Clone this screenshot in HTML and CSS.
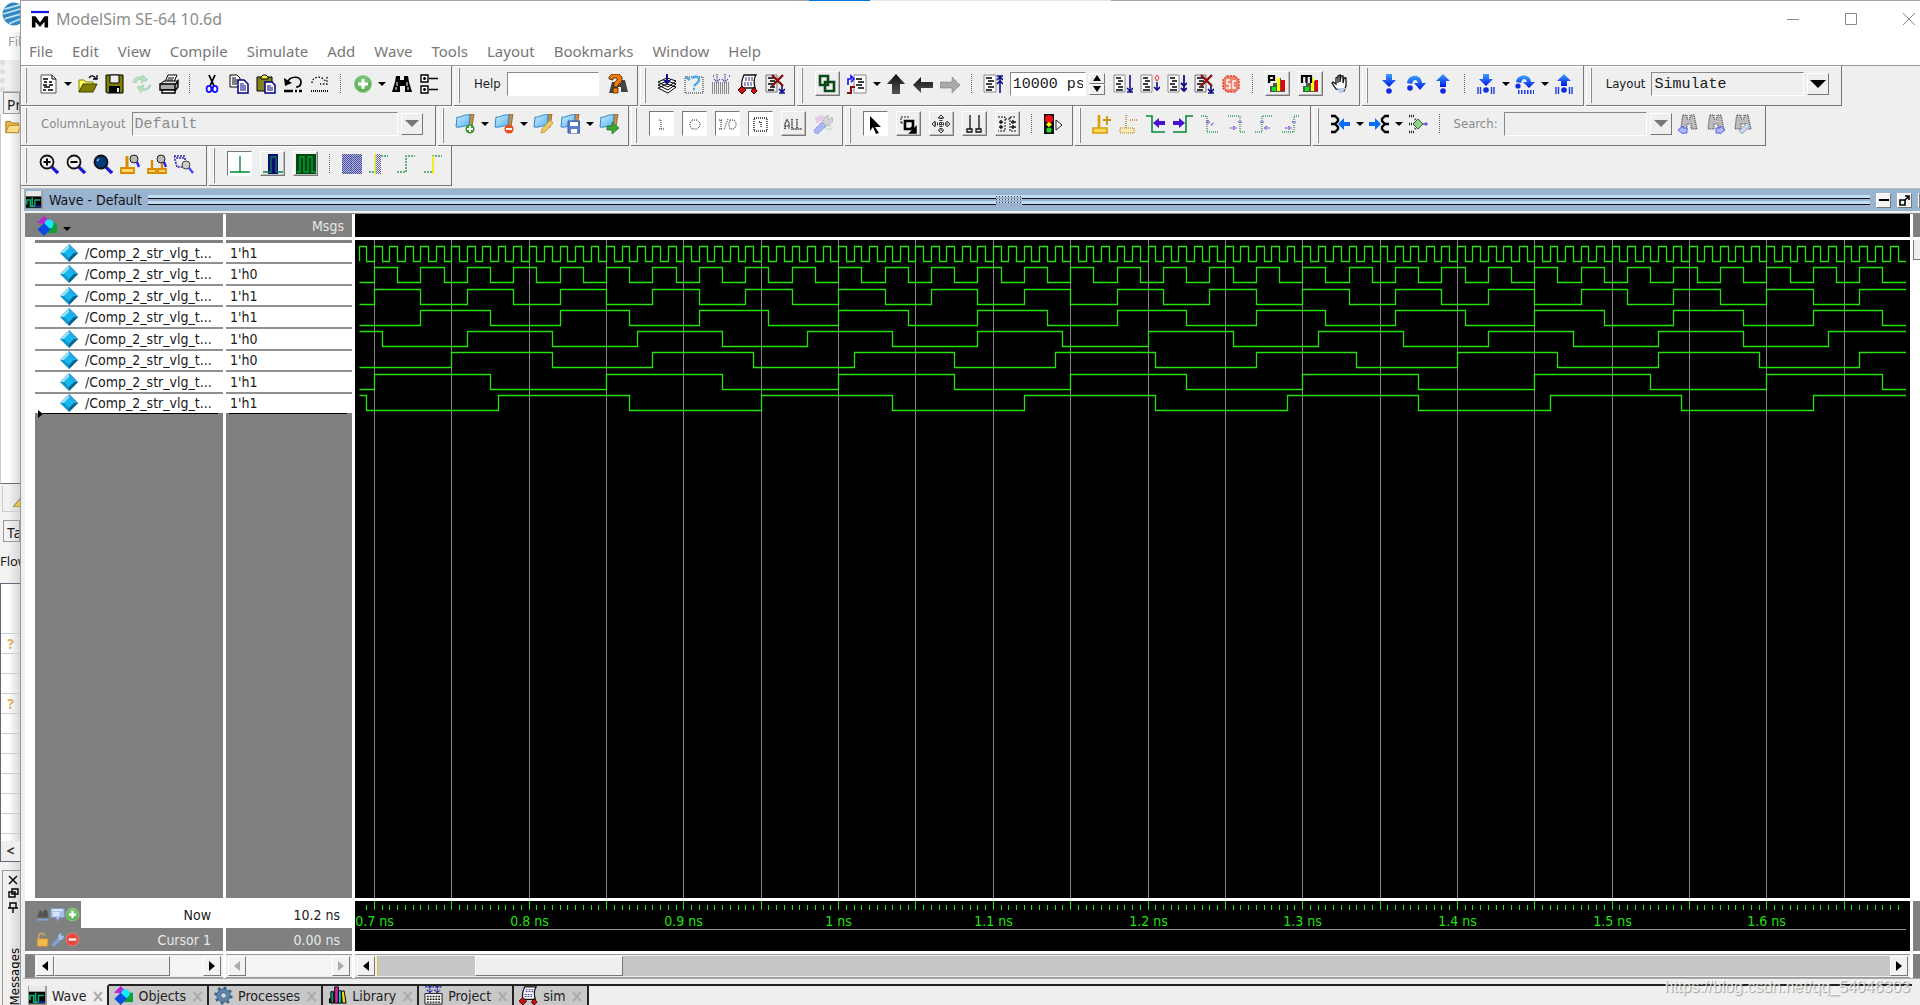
FILE: index.html
```html
<!DOCTYPE html>
<html lang="en">
<head>
<meta charset="utf-8">
<title>ModelSim SE-64 10.6d</title>
<link rel="stylesheet" href="styles.css">
</head>
<body>
<svg class="sprite" aria-hidden="true">
  <defs>
    <linearGradient id="g-blue" x1="0" y1="0" x2="1" y2="1"><stop offset="0" stop-color="#cdeeff"/><stop offset="1" stop-color="#55b0f0"/></linearGradient>
    <linearGradient id="g-dark" x1="0" y1="0" x2="0" y2="1"><stop offset="0" stop-color="#111"/><stop offset="1" stop-color="#555"/></linearGradient>
    <linearGradient id="g-run" x1="0" y1="0" x2="0" y2="1"><stop offset="0" stop-color="#3aa0ff"/><stop offset="1" stop-color="#0018e8"/></linearGradient>
    <pattern id="p-check" width="2" height="2" patternUnits="userSpaceOnUse"><rect width="1" height="1" fill="#000080"/><rect x="1" y="1" width="1" height="1" fill="#000080"/></pattern>
  </defs>
  <symbol id="i-new" viewBox="0 0 20 20"><path d="M2 1h11l4 4v14H2z" fill="#fff" stroke="#555"/><path d="M13 1v4h4" fill="none" stroke="#000"/><path d="M4 5h5M5 8h3M10 8h3M4 11h4M10 11h4M5 13h6M4 16h3M9 16h5" stroke="#000" stroke-width="1.300"/></symbol>
  <symbol id="i-open" viewBox="0 0 20 20"><path d="M1 18V6h5l2 2h7v3" fill="#ffff60" stroke="#808000"/><path d="M1 18l4-8h14l-4 8z" fill="#808000" stroke="#3a3a00"/><path d="M11 4c2-3 5-3 7 1M15 5h4V1" fill="none" stroke="#000" stroke-width="1.3"/></symbol>
  <symbol id="i-save" viewBox="0 0 20 20"><path d="M1 1h17v18H2l-1-1z" fill="#808000" stroke="#000"/><path d="M5 1h9v8H5z" fill="#eee" stroke="#000"/><path d="M4 12h11v7H4z" fill="#000"/><path d="M12 14h2v4h-2z" fill="#eee"/></symbol>
  <symbol id="i-reload" viewBox="0 0 20 20"><g fill="#b9e0c2" stroke="#8cc79a" stroke-dasharray="1 1"><path d="M1 8c1-5 6-6 9-5l1-2 5 5-7 3 1-3c-3-1-5 0-6 3z"/><path d="M19 11c-1 5-6 6-9 5l-1 3-4-6 7-2-1 3c3 1 5 0 6-3z"/></g></symbol>
  <symbol id="i-print" viewBox="0 0 20 20"><path d="M6 8l3-7h9l-3 7z" fill="#fff" stroke="#000"/><path d="M9 4h6M8 6h6" stroke="#000"/><path d="M1 10l4-3h14l-3 4z" fill="#ddd" stroke="#000"/><path d="M1 10h15v6H1zM16 11l3-4v6l-3 4z" fill="#aaa" stroke="#000" stroke-width="1.4"/><path d="M3 16h13v3H3z" fill="#fff" stroke="#000" stroke-width="1.4"/></symbol>
  <symbol id="i-cut" viewBox="0 0 20 20"><path d="M7 1l5 11M13 1L8 12" stroke="#000" stroke-width="1.8" fill="none"/><ellipse cx="7" cy="15" rx="2.4" ry="3.2" fill="none" stroke="#11f" stroke-width="1.8"/><ellipse cx="13" cy="15" rx="2.4" ry="3.2" fill="none" stroke="#11f" stroke-width="1.8"/></symbol>
  <symbol id="i-copy" viewBox="0 0 20 20"><path d="M1 1h7l3 3v9H1z" fill="#fff" stroke="#000"/><path d="M3 4h4M3 6h6M3 8h6M3 10h5" stroke="#000"/><path d="M9 6h6l4 4v9H9z" fill="#fff" stroke="#000080" stroke-width="1.5"/><path d="M11 10h4M11 12h6M11 14h6M11 16h6" stroke="#000080"/></symbol>
  <symbol id="i-paste" viewBox="0 0 20 20"><path d="M1 3h15v14H1z" fill="#808020" stroke="#000"/><path d="M5 5V3l2-2h3l2 2v2z" fill="#ffff40" stroke="#000"/><path d="M9 8h7l3 3v8H9z" fill="#fff" stroke="#000080" stroke-width="1.5"/><path d="M11 12h4M11 14h6M11 16h6" stroke="#000080"/></symbol>
  <symbol id="i-undo" viewBox="0 0 20 20"><path d="M4 9c3-8 14-7 14-1 0 4-3 5-5 5" fill="none" stroke="#000" stroke-width="1.7"/><path d="M1 4l1 8 7-3z" fill="#000"/><path d="M1 17h9M12 17h2M16 17h3" stroke="#000" stroke-width="2.4"/></symbol>
  <symbol id="i-redo" viewBox="0 0 20 20"><path d="M2 9c0-7 10-8 14-1M17 3v7h-7" fill="none" stroke="#111" stroke-width="1.4" stroke-dasharray="1.6 1.6"/><path d="M1 17h18" stroke="#111" stroke-width="2" stroke-dasharray="1 1"/></symbol>
  <symbol id="i-plus" viewBox="0 0 20 20"><circle cx="10" cy="10" r="8.6" fill="#62b25a" stroke="#9fd39a"/><circle cx="10" cy="8" r="6" fill="#8bcb82" opacity=".6"/><path d="M10 5v10M5 10h10" stroke="#fff" stroke-width="3"/></symbol>
  <symbol id="i-minus" viewBox="0 0 20 20"><circle cx="10" cy="10" r="8.6" fill="#e8483f" stroke="#f08a80"/><path d="M5 10h10" stroke="#fff" stroke-width="3"/></symbol>
  <symbol id="i-find" viewBox="0 0 20 20"><path d="M4 2h4v4h4V2h4l1 6 3 10h-7v-6H8v6H0L3 8z" fill="#000"/><path d="M5 8v4M4 13v3M15 8v4M16 13v3" stroke="#fff"/></symbol>
  <symbol id="i-expand" viewBox="0 0 20 20"><g fill="#fff" stroke="#000" stroke-width="1.4"><path d="M2 1h7v7H2zM2 12h7v7H2z"/><path d="M4 4.500h3M4 15.500h3M5.500 3v3M5.500 14v3M10 4.500h9M10 15.500h9"/></g></symbol>
  <symbol id="i-helpfind" viewBox="0 0 20 20"><path d="M4 8h6l2 2 2-4h3l3 12h-7v-5h-3v6H1z" fill="#444"/><path d="M1 5V3l3-3h7l3 3v4l-4 4v2H6V9l3-3V4H5v2zM5 14h5v5H5z" fill="#f47a10" stroke="#402000" stroke-width=".8"/></symbol>
  <symbol id="i-compile" viewBox="0 0 20 20"><path d="M1 14l9-4 9 3-8 6zM1 11l9-4 9 3-8 6zM1 8l9-4 9 3-8 6z" fill="#fff" stroke="#000"/><path d="M10 0v8" stroke="#10108a" stroke-width="2"/><path d="M6 6h8l-4 5z" fill="#10108a"/></symbol>
  <symbol id="i-recomp" viewBox="0 0 20 20"><path d="M1 3h18v16H1z" fill="none" stroke="#222" stroke-dasharray="1 1"/><path d="M8 4c5-3 9 0 6 4l-4 4M2 3l4 3M9 15h2" fill="none" stroke="#4aa8e8" stroke-width="2.4"/></symbol>
  <symbol id="i-compall" viewBox="0 0 20 20"><path d="M1 9h18M1 11h18M1 13h18M1 15h18M1 17h18M1 19h18" stroke="#222" stroke-dasharray="1 1"/><path d="M6 0v7M14 0v7M3 5l3 3 3-3M11 5l3 3 3-3M2 2h1M18 2h1" stroke="#3a3aa0" stroke-width="1.3" fill="none" stroke-dasharray="1 .8"/></symbol>
  <symbol id="i-project" viewBox="0 0 20 20"><path d="M1 8h18v11H1z" fill="#fff" stroke="#111"/><path d="M3 11h15M3 14h15M3 17h15" stroke="#111" stroke-width="1.500" stroke-dasharray="2 1"/><path d="M6 0v7M14 0v7M3 4l3 3 3-3M11 4l3 3 3-3M1 1h18" stroke="#2a2aa0" stroke-width="1.400" fill="none" stroke-dasharray="2 .6"/></symbol>
  <symbol id="i-sim" viewBox="0 0 20 20"><path d="M6 1h12c-2 3-2 9-1 13H4C3 9 4 5 6 1z" fill="#fff" stroke="#111" stroke-width="1.3"/><path d="M7 4h8M7 6h8M6 9h8M6 11h8" stroke="#2a2a90" stroke-dasharray="2 1"/><path d="M4 12l4 4-4 4-4-4zM16 13l3 4-3 3-3-3z" fill="#d01010" stroke="#300" stroke-width="1"/></symbol>
  <symbol id="i-endsim" viewBox="0 0 20 20"><path d="M1 1h11v17H1z" fill="#eee" stroke="#777"/><path d="M3 4h6M5 7h5M3 10h6M5 13h5M3 16h6" stroke="#000" stroke-width="1.6"/><path d="M7 1l11 11M18 1L7 12" stroke="#8a0c0c" stroke-width="2.4"/><path d="M17 12v6M14 19h6M14 15l3 3 3-3" stroke="#10108a" stroke-width="1.6" fill="none"/></symbol>
  <symbol id="i-coupling" viewBox="0 0 20 20"><path d="M3 2h8v9H3zM8 8h9v9H8z" fill="none" stroke="#0a4a1a" stroke-width="2.6"/></symbol>
  <symbol id="i-restart" viewBox="0 0 20 20"><path d="M7 1h12v18H7z" fill="#fff" stroke="#888"/><path d="M9 5h6M11 8h6M9 11h6M11 14h6" stroke="#000" stroke-width="1.5"/><path d="M1 11V5h3V2l3 3-3 3" fill="none" stroke="#11f" stroke-width="1.6"/><path d="M0 19h4v-6h4" fill="none" stroke="#8a0c0c" stroke-width="2"/></symbol>
  <symbol id="i-up" viewBox="0 0 20 20"><path d="M10 0l9 10h-5v10H6V10H1z" fill="url(#g-dark)"/></symbol>
  <symbol id="i-left" viewBox="0 0 20 20"><path d="M0 11l8-8v5h12v6H8v5z" fill="url(#g-dark)"/></symbol>
  <symbol id="i-right" viewBox="0 0 20 20"><path d="M20 11l-8-8v5H0v6h12v5z" fill="#aaa" stroke="#777" stroke-dasharray="1 1"/></symbol>
  <symbol id="i-runtop" viewBox="0 0 20 20"><path d="M1 1h12v17H1z" fill="#fff" stroke="#888"/><path d="M3 4h6M5 7h6M3 10h6M5 13h6M3 16h6" stroke="#000" stroke-width="1.5"/><path d="M17 3v16M14 2h6M14 6l3-3 3 3M14 10l3-3 3 3" fill="none" stroke="#10108a" stroke-width="1.6"/></symbol>
  <symbol id="i-run" viewBox="0 0 20 20"><path d="M1 1h11v17H1z" fill="#fff" stroke="#888"/><path d="M3 4h5M5 7h5M3 10h5M5 13h5M3 16h7" stroke="#000" stroke-width="1.5"/><path d="M17 1v16M14 18h6M14 14l3 3 3-3" fill="none" stroke="#10108a" stroke-width="1.6"/></symbol>
  <symbol id="i-cont" viewBox="0 0 20 20"><path d="M1 1h11v17H1z" fill="#fff" stroke="#888"/><path d="M3 4h5M5 7h5M3 10h5M5 13h5M3 16h7" stroke="#000" stroke-width="1.5"/><path d="M17 8v8M14 13l3 3 3-3" fill="none" stroke="#10108a" stroke-width="1.6"/><path d="M17 1l2 3-2 3-2-3z" fill="#fff" stroke="#f22"/></symbol>
  <symbol id="i-runall" viewBox="0 0 20 20"><path d="M1 1h11v17H1z" fill="#fff" stroke="#888"/><path d="M3 4h5M5 7h5M3 10h5M5 13h5M3 16h7" stroke="#000" stroke-width="1.5"/><path d="M17 1v16M14 9l3 3 3-3M14 14l3 3 3-3" fill="none" stroke="#10108a" stroke-width="1.8"/></symbol>
  <symbol id="i-stop" viewBox="0 0 20 20"><path d="M6 2h8l4 4v8l-4 4H6l-4-4V6z" fill="#f0836f" stroke="#e8452e" stroke-width="1.5" stroke-dasharray="2 1"/><path d="M9 6H6v4h3v4H5M15 7h-3v7h3" stroke="#fff" stroke-width="1.4" fill="none"/></symbol>
  <symbol id="i-perf" viewBox="0 0 20 20"><path d="M3 12h3V9h4V4h4v3h4v11H3z" fill="#555"/><path d="M5 13h4v4H5z" fill="#0e0"/><path d="M10 4h3v13h-3z" fill="#ff0"/><path d="M14 6h4v11h-4z" fill="#e00"/><path d="M2 9V2h5v4H2" fill="none" stroke="#000" stroke-width="2.2"/></symbol>
  <symbol id="i-mem" viewBox="0 0 20 20"><path d="M3 12h3V9h4V4h4v3h4v11H3z" fill="#555"/><path d="M5 13h4v4H5z" fill="#0e0"/><path d="M11 4h3v13h-3z" fill="#ff0"/><path d="M15 6h3v11h-3z" fill="#e00"/><path d="M2 9V2h9v7M6.500 2v7" fill="none" stroke="#000" stroke-width="2.2"/></symbol>
  <symbol id="i-hand" viewBox="0 0 20 20"><path d="M6 15L2 9l1-1 3 2V4l2-1v6V2l2-1v7l1-6h2v7l1-5h2v8l-2 5z" fill="#fff" stroke="#111" stroke-width="1.3"/><path d="M7 14h9l-4 5H9z" fill="#b8cdea"/></symbol>
  <symbol id="i-stepin" viewBox="0 0 20 20"><path d="M7 0h6v6h4l-7 7-7-7h4z" fill="url(#g-run)"/><circle cx="10" cy="17" r="2.800" fill="#1428e0"/></symbol>
  <symbol id="i-stepover" viewBox="0 0 20 20"><path d="M1 9c1-9 14-10 15 0h4l-6 7-6-7h4c-1-4-5-4-6 1z" fill="url(#g-run)"/><circle cx="4" cy="14" r="2.800" fill="#1428e0"/></symbol>
  <symbol id="i-stepout" viewBox="0 0 20 20"><path d="M7 13h6V7h4l-7-7-7 7h4z" fill="url(#g-run)"/><circle cx="10" cy="17" r="2.800" fill="#1428e0"/></symbol>
  <symbol id="i-stepin2" viewBox="0 0 20 20"><path d="M7 0h6v5h4l-7 7-7-7h4z" fill="url(#g-run)"/><path d="M2 13v7M4.500 13v7M15.500 13v7M18 13v7" stroke="#1a3ae8" stroke-width="1.4"/><circle cx="10" cy="16" r="2.800" fill="#1428e0"/></symbol>
  <symbol id="i-stepover2" viewBox="0 0 20 20"><path d="M1 8c1-8 14-9 15 0h4l-6 6-6-6h4c-1-4-5-4-6 1z" fill="url(#g-run)"/><circle cx="3" cy="12" r="2.600" fill="#1428e0"/><path d="M3 18h16" stroke="#1a3ae8" stroke-width="4" stroke-dasharray="1.500 1.500"/></symbol>
  <symbol id="i-stepout2" viewBox="0 0 20 20"><path d="M7 12h6V7h4l-7-7-7 7h4z" fill="url(#g-run)"/><path d="M2 13v7M4.500 13v7M15.500 13v7M18 13v7" stroke="#1a3ae8" stroke-width="1.4"/><circle cx="10" cy="16" r="2.800" fill="#1428e0"/></symbol>
  <symbol id="i-flag" viewBox="0 0 20 20"><path d="M15 0h4l-2 13h-3z" fill="#c98d48" stroke="#7a4f1e" stroke-width=".7"/><path d="M2 3c4 1 6-3 13-2l-1 11c-5-1-8 2-13 1z" fill="url(#g-blue)" stroke="#2f86c8"/></symbol>
  <symbol id="i-flagadd" viewBox="0 0 20 20"><use href="#i-flag"/><circle cx="15" cy="15" r="4.600" fill="#3f9a30"/><path d="M15 12v6M12 15h6" stroke="#fff" stroke-width="1.8"/></symbol>
  <symbol id="i-flagdel" viewBox="0 0 20 20"><use href="#i-flag"/><circle cx="15" cy="15" r="4.600" fill="#e8501c"/><path d="M12 15h6" stroke="#fff" stroke-width="2"/></symbol>
  <symbol id="i-flagedit" viewBox="0 0 20 20"><use href="#i-flag"/><path d="M8 19l1-4 8-9 3 3-8 9z" fill="#f2c860" stroke="#b98a28" stroke-width=".8"/></symbol>
  <symbol id="i-flagsave" viewBox="0 0 20 20"><use href="#i-flag"/><path d="M8 7h12v12H8z" fill="#5b7fd0" stroke="#3a55a0"/><path d="M10 8h8v4h-8zM11 15h6v4h-6z" fill="#fff"/></symbol>
  <symbol id="i-flaggo" viewBox="0 0 20 20"><use href="#i-flag"/><path d="M8 12h5V8l7 6-7 6v-4H8z" fill="#3fa535" stroke="#2a7a22" stroke-width=".8"/></symbol>
  <symbol id="i-in" viewBox="0 0 20 20"><path d="M8 6h2v9M8 15h5" fill="none" stroke="#222" stroke-dasharray="1 1"/></symbol>
  <symbol id="i-out" viewBox="0 0 20 20"><path d="M8 6h5l3 3v3l-3 3H8l-2-3V9z" fill="none" stroke="#222" stroke-dasharray="1 1"/></symbol>
  <symbol id="i-inout" viewBox="0 0 20 20"><path d="M2 6h4M4 6v9M2 15h4M11 5L7 16M13 6h4l2 3v3l-2 3h-4l-1-3V9z" fill="none" stroke="#222" stroke-dasharray="1 1"/></symbol>
  <symbol id="i-internal" viewBox="0 0 20 20"><path d="M4 4h13v13H4zM9 8h2v6" fill="none" stroke="#222" stroke-width="1.4" stroke-dasharray="1 1"/></symbol>
  <symbol id="i-all" viewBox="0 0 20 20"><path d="M2 15V9l2-3 2 3v6M2 12h4M9 5v10h4M14 5v10h5" fill="none" stroke="#333" stroke-width="1.6" stroke-dasharray="1 .6"/></symbol>
  <symbol id="i-wrench" viewBox="0 0 20 20"><path d="M2 5l8-3M3 8l7-3" stroke="#e9c9ea" stroke-width="3"/><path d="M12 12h7M12 15h7" stroke="#cfe8cf" stroke-width="2"/><path d="M2 19l-1-3 8-8 4 4-8 8z" fill="#a8b6f6" stroke="#6a80e0" stroke-dasharray="1 1"/><path d="M10 9l1-5 4-3v4h3l1-2 1 4-4 4h-4z" fill="#d4d4d4" stroke="#999" stroke-dasharray="1 1"/></symbol>
  <symbol id="i-pointer" viewBox="0 0 20 20"><path d="M5 2l11 11h-6l4 6-3 1-3-7-3 4z" fill="#000"/></symbol>
  <symbol id="i-zoombox" viewBox="0 0 20 20"><path d="M3 9V3h9M3 9h4" fill="none" stroke="#222" stroke-dasharray="2 1"/><path d="M7 7h8v8H7z" fill="none" stroke="#000" stroke-width="2.600"/><path d="M13 13l5 5M18 13v6h-6z" fill="#000" stroke="#000" stroke-width="1.500"/></symbol>
  <symbol id="i-pan" viewBox="0 0 20 20"><path d="M10 1l3 3H7zM10 19l3-3H7zM1 10l3-3v6zM19 10l-3-3v6z" fill="none" stroke="#333"/><path d="M10 4v12M4 10h12" stroke="#333" stroke-width="3" stroke-dasharray="1 1"/></symbol>
  <symbol id="i-cursors" viewBox="0 0 20 20"><path d="M6 1v14M15 1v14M3 15h5v3H3zM12 15h5v3h-5z" fill="none" stroke="#111" stroke-width="1.300"/></symbol>
  <symbol id="i-edit" viewBox="0 0 20 20"><path d="M1 3h7v14H1M8 5h5M13 3v14h6M13 3h6" fill="none" stroke="#111" stroke-dasharray="2 1"/><path d="M2 8h4M2 13h4M14 8h5M14 13h5M16 6v4M16 11v4M4 6v4M4 11v4" stroke="#111" stroke-width="1.400"/></symbol>
  <symbol id="i-traffic" viewBox="0 0 20 20"><path d="M1 0h10v20H1z" fill="#111"/><circle cx="6" cy="5" r="4" fill="#f01010"/><path d="M6 8l3 2.500-3 2.500-3-2.500z" fill="#ff0"/><circle cx="6" cy="16" r="2.600" fill="#2d2"/><path d="M13 6l6 5-6 5z" fill="#fff" stroke="#222"/></symbol>
  <symbol id="i-curadd" viewBox="0 0 20 20"><path d="M7 1v13" stroke="#d9a000" stroke-width="2.600"/><path d="M1 14h14v5H1z" fill="#f8d860" stroke="#d9a000" stroke-width="1.600"/><path d="M15 2v9M11 6h8" stroke="#c89400" stroke-width="1.800"/></symbol>
  <symbol id="i-curdel" viewBox="0 0 20 20"><path d="M7 1v13M11 6h8" stroke="#c8a050" stroke-width="2" stroke-dasharray="1 1"/><path d="M1 14h14v5H1z" fill="#f8ecb8" stroke="#c8a050" stroke-width="1.600" stroke-dasharray="1 1"/></symbol>
  <symbol id="i-prevedge" viewBox="0 0 20 20"><path d="M0 2h6v16h13" fill="none" stroke="#0a8a3a" stroke-width="1.600"/><path d="M7 9l6-5v3h6v4h-6v3z" fill="#4a10d0"/></symbol>
  <symbol id="i-nextedge" viewBox="0 0 20 20"><path d="M0 18h13V2h7" fill="none" stroke="#0a8a3a" stroke-width="1.600"/><path d="M12 9L6 4v3H0v4h6v3z" fill="#4a10d0"/></symbol>
  <symbol id="i-e1" viewBox="0 0 20 20"><path d="M1 2h6v16h12" fill="none" stroke="#3a9a5a" stroke-dasharray="1 1" stroke-width="1.400"/><path d="M6 8h4M8 6v4M11 11l3-2" stroke="#7a50d8" stroke-width="1.600" stroke-dasharray="1 .6"/></symbol>
  <symbol id="i-e2" viewBox="0 0 20 20"><path d="M1 2h12v16h6" fill="none" stroke="#3a9a5a" stroke-dasharray="1 1" stroke-width="1.400"/><path d="M3 14h7M7 12v4M11 8h4" stroke="#7a50d8" stroke-width="1.600" stroke-dasharray="1 .6"/></symbol>
  <symbol id="i-e3" viewBox="0 0 20 20"><path d="M1 18h7V2h10" fill="none" stroke="#3a9a5a" stroke-dasharray="1 1" stroke-width="1.400"/><path d="M6 8h4M10 14h6M12 12v4" stroke="#7a50d8" stroke-width="1.600" stroke-dasharray="1 .6"/></symbol>
  <symbol id="i-e4" viewBox="0 0 20 20"><path d="M1 18h12V2h6" fill="none" stroke="#3a9a5a" stroke-dasharray="1 1" stroke-width="1.400"/><path d="M4 14h7M8 12v4M11 8h4" stroke="#7a50d8" stroke-width="1.600" stroke-dasharray="1 .6"/></symbol>
  <symbol id="i-merge" viewBox="0 0 20 20"><path d="M1 2h4l3 3v2l-3 3H1M5 10l3 3v2l-3 3H1" fill="none" stroke="#000" stroke-width="2.400"/><path d="M8 10l6-6v4h6v4h-6v4z" fill="#0a6cf0"/></symbol>
  <symbol id="i-split" viewBox="0 0 20 20"><path d="M20 2h-4l-3 3v2l3 3h4M16 10l-3 3v2l3 3h4" fill="none" stroke="#000" stroke-width="2.400"/><path d="M12 10L6 4v4H0v4h6v4z" fill="#0a6cf0"/></symbol>
  <symbol id="i-node" viewBox="0 0 20 20"><path d="M1 2h5M1 10h5M1 18h5M7 5l2 2M7 15l2-2" stroke="#222" stroke-width="2.400" stroke-dasharray="1 1"/><path d="M10 5l5 5-5 5-5-5z" fill="#8fd08f" stroke="#2a6a2a"/><path d="M15 10h2" stroke="#222"/><path d="M18 8l2 2-2 2-2-2z" fill="#6a50e8"/></symbol>
  <symbol id="i-bino" viewBox="0 0 20 20"><path d="M5 1h4v4h3V1h4l1 5 2 9h-6v-5H9v5H3l1-9z" fill="#bcbcbc" stroke="#444" stroke-width="1.200" stroke-dasharray="1 1"/></symbol>
  <symbol id="i-sprev" viewBox="0 0 20 20"><use href="#i-bino"/><path d="M0 16l5-4v2h4v5H5v1z" fill="#b0b8ff" stroke="#5060f0"/></symbol>
  <symbol id="i-snext" viewBox="0 0 20 20"><use href="#i-bino"/><path d="M20 16l-5-4v2h-4v5h4v1z" fill="#b0b8ff" stroke="#5060f0"/></symbol>
  <symbol id="i-sopt" viewBox="0 0 20 20"><use href="#i-bino"/><path d="M7 17l8-8 3 3-8 8z" fill="#c4d6f0" stroke="#9ab"/></symbol>
  <symbol id="i-lens" viewBox="0 0 20 20"><path d="M13 13l6 6" stroke="#1414e0" stroke-width="3.400"/><path d="M14 12l5 5" stroke="#888"/><circle cx="8" cy="8" r="6.500" stroke="#111" stroke-width="1.800"/></symbol>
  <symbol id="i-zin" viewBox="0 0 20 20"><use href="#i-lens" fill="#f4f4f4"/><path d="M4.500 8h7M8 4.500v7" stroke="#000" stroke-width="2"/></symbol>
  <symbol id="i-zout" viewBox="0 0 20 20"><use href="#i-lens" fill="#f4f4f4"/><path d="M4.500 8h7" stroke="#000" stroke-width="2"/></symbol>
  <symbol id="i-zfull" viewBox="0 0 20 20"><use href="#i-lens" fill="#003c7c"/><path d="M4 7l2-2" stroke="#8cf" stroke-width="1.500"/></symbol>
  <symbol id="i-zcur" viewBox="0 0 20 20"><path d="M7 2v12" stroke="#d98a00" stroke-width="3"/><path d="M1 14h13v5H1z" fill="#f8d860" stroke="#d98a00" stroke-width="1.800"/><circle cx="14" cy="5" r="4" fill="#bbb" stroke="#222"/><path d="M17 8l2 5" stroke="#22f" stroke-width="2.400"/></symbol>
  <symbol id="i-zcurs" viewBox="0 0 20 20"><path d="M5 6v9M15 9v6" stroke="#d98a00" stroke-width="2.400"/><path d="M1 15h8v4H1zM11 15h8v4h-8z" fill="#f8d860" stroke="#d98a00" stroke-width="1.800"/><circle cx="14" cy="5" r="4" fill="#bbb" stroke="#222"/><path d="M17 8l2 5" stroke="#22f" stroke-width="2.400"/></symbol>
  <symbol id="i-zsel" viewBox="0 0 20 20"><path d="M0 2h11M0 2l3 11h5M2 4h9v4" fill="none" stroke="#2a2ab0" stroke-width="1.600" stroke-dasharray="2 1"/><circle cx="12" cy="11" r="4" fill="#ccc" stroke="#444"/><path d="M15 14l4 5" stroke="#44f" stroke-width="2.400"/></symbol>
  <symbol id="i-w1" viewBox="0 0 20 20"><path d="M0 18h20M10 2v16" stroke="#0a8a3a" stroke-width="1.400"/></symbol>
  <symbol id="i-w2" viewBox="0 0 20 20"><path d="M5 0h10v20H5z" fill="#0c0c78"/><path d="M0 18h8V3h5v15h7" fill="none" stroke="#0a7a4a" stroke-width="1.400"/></symbol>
  <symbol id="i-w3" viewBox="0 0 20 20"><path d="M0 0h20v20H0z" fill="#004a10"/><path d="M1 18h3V3h4v15h4V3h4v15h4" fill="none" stroke="#0a9a3a" stroke-width="1.400"/></symbol>
  <symbol id="i-w4" viewBox="0 0 20 20"><path d="M0 0h20v20H0z" fill="#b4b4dc"/><path d="M0 0h20v20H0z" fill="url(#p-check)" opacity=".6"/><path d="M1 18h9V2h9" fill="none" stroke="#5a9a7a" stroke-dasharray="1 1"/></symbol>
  <symbol id="i-w5" viewBox="0 0 20 20"><path d="M6 0h6v20H6z" fill="url(#p-check)" opacity=".6"/><path d="M6 0v20" stroke="#ee2" stroke-width="1.400"/><path d="M0 18h6M12 2h7" stroke="#3a9a5a" stroke-dasharray="2 1" stroke-width="1.400"/></symbol>
  <symbol id="i-w6" viewBox="0 0 20 20"><path d="M1 18h9V2h9" fill="none" stroke="#3a9a5a" stroke-dasharray="2 1" stroke-width="1.500"/></symbol>
  <symbol id="i-w7" viewBox="0 0 20 20"><path d="M1 18h9V2h9" fill="none" stroke="#3a9a5a" stroke-dasharray="2 1" stroke-width="1.500"/><path d="M10 2v18" stroke="#ee2" stroke-width="2"/></symbol>
  <symbol id="i-wave" viewBox="0 0 20 20"><path d="M0 0h20v20H0z" fill="#000"/><path d="M0 0h20v6H0z" fill="#e8e8e8"/><path d="M0 0v20M0 19.500h20M19 0v20" stroke="#999" stroke-width="2"/><path d="M2 15v-5h4v7h5v-7h6M8 7v10" fill="none" stroke="#0ab070" stroke-width="1.600"/><path d="M11 17h7" stroke="#22c" stroke-width="1.600"/></symbol>
  <symbol id="i-objects" viewBox="0 0 20 20"><path d="M0 7l7-7 5 5-5 3z" fill="#b824d8"/><path d="M11 7h9v10h-9z" fill="#12a038"/><circle cx="12" cy="8" r="4.500" fill="#14e8ff"/><path d="M7 7l6.500 6.500L7 20 .5 13.500z" fill="#0a4ce0"/></symbol>
  <symbol id="i-gear" viewBox="0 0 20 20"><circle cx="10" cy="10" r="7" fill="#5d86aa" stroke="#3c6488"/><circle cx="10" cy="10" r="8.300" fill="none" stroke="#3c6488" stroke-width="2.600" stroke-dasharray="3 3.500"/><circle cx="10" cy="10" r="3" fill="#cfd6dc" stroke="#3c6488"/></symbol>
  <symbol id="i-lib" viewBox="0 0 20 20"><path d="M1 13h18v5H1z" fill="#000"/><path d="M3 6h3v12H3z" fill="#189070" stroke="#000"/><path d="M7 1h4v17H7z" fill="#d020a0" stroke="#000"/><path d="M11 5h3v13h-3z" fill="#22c8d8" stroke="#000"/><path d="M14 6l3-1 2 13h-4z" fill="#e8d820" stroke="#000"/></symbol>
  <symbol id="i-diamond" viewBox="0 0 20 20"><path d="M10 0l10 10-10 10L0 10z" fill="#1394c9"/><path d="M10 0l10 10h-5l-5-5z" fill="#2aa6dc"/><path d="M10 0v5l-5 5H0z" fill="#9adcf6"/><path d="M10 20l10-10h-5l-5 5z" fill="#0b5f88"/><path d="M10 4.500l5.500 5.500-5.500 5.500L4.500 10z" fill="#12b9ee"/></symbol>
  <symbol id="i-lock" viewBox="0 0 20 20"><path d="M5 9V5c0-4 8-4 8 0" fill="none" stroke="#bfa46a" stroke-width="2.400"/><path d="M3 9h14v10H3z" fill="#f0bc50" stroke="#c98f28"/></symbol>
  <symbol id="i-tool" viewBox="0 0 20 20"><path d="M2 17l9-9 3 3-9 9z" fill="#7fa4e0"/><path d="M11 9V4l4-3v4h4l-2 5-4 1z" fill="#9fc0ee"/></symbol>
  <symbol id="i-grp" viewBox="0 0 20 20"><path d="M3 14l3-9h3l1 3 2-4h4l2 10z" fill="#555"/><path d="M3 17h15" stroke="#7aa8e8" stroke-width="2"/></symbol>
  <symbol id="i-note" viewBox="0 0 20 20"><path d="M1 2h18v12h-6l-3 5-2-5H1z" fill="#a9c4ea" stroke="#7795c8"/><path d="M3 4h14M4 8h9M4 11h8" stroke="#e8f0ff" stroke-width="2"/></symbol>
  <symbol id="i-logo" viewBox="0 0 20 20"><path d="M0 1h20v2.500H0z" fill="#1a1ae8"/><path d="M1 19.500V7h4l5 7 5-7h4v12.500h-4V13l-5 6-5-6v6.500z" fill="#000"/></symbol>
</svg>

<div class="desktop">
  <aside class="backwin" aria-hidden="true">
    <div class="bw-title"><svg class="globe" viewBox="0 0 20 20"><circle cx="10" cy="10" r="9.500" fill="#2f88c0"/><path d="M2 6l14-4M1 10l17-5M2 14l17-5M6 18l12-5" stroke="#bfe0f4" stroke-width="1.500"/></svg></div>
    <div class="bw-menu">File</div>
    <div class="bw-tools"></div>
    <div class="bw-tab">Project</div>
    <div class="bw-pane"><svg class="folder" viewBox="0 0 20 20"><path d="M1 3h6l2 2h8v12H1z" fill="#e8b450" stroke="#9a6a18"/><path d="M1 17l4-9h15l-4 9z" fill="#fbdc88" stroke="#b88420"/></svg></div>
    <div class="bw-warn"><svg viewBox="0 0 12 12"><path d="M10 0l8 12H0z" fill="#e8c440" stroke="#777"/></svg></div>
    <div class="bw-tab">Tasks</div>
    <div class="bw-flow">Flow:</div>
    <div class="bw-list"><div class="bw-first"></div><div>?</div><div></div><div></div><div>?</div><div></div><div></div><div></div><div></div><div></div><div></div><div class="bw-scroll">&lt;</div></div>
    <div class="bw-msgs">
      <svg viewBox="0 0 12 40"><path d="M2 2l8 8M10 2l-8 8M5 15h6v5H5zM2 18h6v5H2zM3 29h6v5H3zM1 34h10M6 34v5" fill="none" stroke="#000" stroke-width="1.400"/></svg>
      <span>Messages</span>
    </div>
  </aside>

  <main class="window">
    <header class="titlebar">
      <svg class="logo"><use href="#i-logo"/></svg>
      <h1>ModelSim SE-64 10.6d</h1>
      <div class="winbtns">
        <button aria-label="Minimize"><svg viewBox="0 0 12 12"><path d="M0 6.500h12"/></svg></button>
        <button aria-label="Maximize"><svg viewBox="0 0 12 12"><path d="M.5.5h11v11H.5z"/></svg></button>
        <button aria-label="Close"><svg viewBox="0 0 12 12"><path d="M0 0l12 12M12 0L0 12"/></svg></button>
      </div>
    </header>
    <nav class="menubar">
      <button>File</button><button>Edit</button><button>View</button><button>Compile</button><button>Simulate</button><button>Add</button><button>Wave</button><button>Tools</button><button>Layout</button><button>Bookmarks</button><button>Window</button><button>Help</button>
    </nav>

    <section class="toolbars" aria-label="Toolbars">
      <div class="toolrow">
        <div class="group wide">
          <button class="tool" aria-label="New"><svg><use href="#i-new"/></svg></button><button class="caret" aria-label="New menu"></button>
          <button class="tool" aria-label="Open"><svg><use href="#i-open"/></svg></button>
          <button class="tool" aria-label="Save"><svg><use href="#i-save"/></svg></button>
          <button class="tool" aria-label="Reload"><svg><use href="#i-reload"/></svg></button>
          <button class="tool" aria-label="Print"><svg><use href="#i-print"/></svg></button>
          <i class="sep"></i>
          <button class="tool" aria-label="Cut"><svg><use href="#i-cut"/></svg></button>
          <button class="tool" aria-label="Copy"><svg><use href="#i-copy"/></svg></button>
          <button class="tool" aria-label="Paste"><svg><use href="#i-paste"/></svg></button>
          <button class="tool" aria-label="Undo"><svg><use href="#i-undo"/></svg></button>
          <button class="tool" aria-label="Redo"><svg><use href="#i-redo"/></svg></button>
          <i class="sep"></i>
          <button class="tool" aria-label="Add"><svg><use href="#i-plus"/></svg></button><button class="caret" aria-label="Add menu"></button>
          <button class="tool" aria-label="Find"><svg><use href="#i-find"/></svg></button>
          <button class="tool" aria-label="Expand"><svg><use href="#i-expand"/></svg></button>
        </div>
        <div class="group">
          <label for="help">Help</label><input id="help" class="field help" type="text">
          <button class="tool" aria-label="Search help"><svg><use href="#i-helpfind"/></svg></button>
        </div>
        <div class="group">
          <button class="tool" aria-label="Compile"><svg><use href="#i-compile"/></svg></button>
          <button class="tool" aria-label="Compile out of date"><svg><use href="#i-recomp"/></svg></button>
          <button class="tool" aria-label="Compile all"><svg><use href="#i-compall"/></svg></button>
          <button class="tool" aria-label="Simulate"><svg><use href="#i-sim"/></svg></button>
          <button class="tool" aria-label="Break"><svg><use href="#i-endsim"/></svg></button>
        </div>
        <div class="group">
          <button class="key" aria-label="Coupling"><svg><use href="#i-coupling"/></svg></button>
          <button class="tool" aria-label="Restart"><svg><use href="#i-restart"/></svg></button><button class="caret" aria-label="Restart menu"></button>
          <button class="tool" aria-label="Up"><svg><use href="#i-up"/></svg></button>
          <button class="tool" aria-label="Back"><svg><use href="#i-left"/></svg></button>
          <button class="tool" aria-label="Forward"><svg><use href="#i-right"/></svg></button>
          <i class="sep"></i>
          <button class="tool" aria-label="Restart run"><svg><use href="#i-runtop"/></svg></button>
          <input class="field runlen" type="text" value="10000 ps" aria-label="Run length">
          <span class="spin"><button class="spin-up" aria-label="Increase"></button><button class="spin-down" aria-label="Decrease"></button></span>
          <button class="tool" aria-label="Run"><svg><use href="#i-run"/></svg></button>
          <button class="tool" aria-label="Continue run"><svg><use href="#i-cont"/></svg></button>
          <button class="tool" aria-label="Run all"><svg><use href="#i-runall"/></svg></button>
          <button class="tool" aria-label="Break run"><svg><use href="#i-endsim"/></svg></button>
          <button class="tool" aria-label="Stop"><svg><use href="#i-stop"/></svg></button>
          <i class="sep"></i>
          <button class="key" aria-label="Performance"><svg><use href="#i-perf"/></svg></button>
          <button class="key" aria-label="Memory"><svg><use href="#i-mem"/></svg></button>
          <button class="tool" aria-label="Pan"><svg><use href="#i-hand"/></svg></button>
        </div>
        <div class="group">
          <button class="tool" aria-label="Step into"><svg><use href="#i-stepin"/></svg></button>
          <button class="tool" aria-label="Step over"><svg><use href="#i-stepover"/></svg></button>
          <button class="tool" aria-label="Step out"><svg><use href="#i-stepout"/></svg></button>
          <i class="sep"></i>
          <button class="tool" aria-label="Step into instance"><svg><use href="#i-stepin2"/></svg></button><button class="caret" aria-label="Step into menu"></button>
          <button class="tool" aria-label="Step over instance"><svg><use href="#i-stepover2"/></svg></button><button class="caret" aria-label="Step over menu"></button>
          <button class="tool" aria-label="Step out instance"><svg><use href="#i-stepout2"/></svg></button>
        </div>
        <div class="group wide">
          <label for="layout">Layout</label><select id="layout" class="field layout"><option>Simulate</option></select><span class="drop"></span>
        </div>
      </div>

      <div class="toolrow">
        <div class="group wide">
          <label for="collayout" class="dim">ColumnLayout</label><select id="collayout" class="field collayout dim"><option>Default</option></select><span class="drop off"></span>
        </div>
        <div class="group">
          <button class="tool" aria-label="Add bookmark"><svg><use href="#i-flagadd"/></svg></button><button class="caret" aria-label="Add bookmark menu"></button>
          <button class="tool" aria-label="Delete bookmark"><svg><use href="#i-flagdel"/></svg></button><button class="caret" aria-label="Delete bookmark menu"></button>
          <button class="tool" aria-label="Edit bookmark"><svg><use href="#i-flagedit"/></svg></button>
          <button class="tool" aria-label="Save bookmarks"><svg><use href="#i-flagsave"/></svg></button><button class="caret" aria-label="Save bookmarks menu"></button>
          <button class="tool" aria-label="Go to bookmark"><svg><use href="#i-flaggo"/></svg></button>
        </div>
        <div class="group">
          <button class="key down" aria-label="Inputs"><svg><use href="#i-in"/></svg></button>
          <button class="key down" aria-label="Outputs"><svg><use href="#i-out"/></svg></button>
          <button class="key down" aria-label="Inouts"><svg><use href="#i-inout"/></svg></button>
          <button class="key down" aria-label="Internal"><svg><use href="#i-internal"/></svg></button>
          <button class="key" aria-label="All"><svg><use href="#i-all"/></svg></button>
          <button class="tool" aria-label="Filter options"><svg><use href="#i-wrench"/></svg></button>
        </div>
        <div class="group">
          <button class="key down" aria-label="Select mode"><svg><use href="#i-pointer"/></svg></button>
          <button class="key" aria-label="Zoom mode"><svg><use href="#i-zoombox"/></svg></button>
          <button class="key" aria-label="Pan mode"><svg><use href="#i-pan"/></svg></button>
          <button class="key" aria-label="Two cursor mode"><svg><use href="#i-cursors"/></svg></button>
          <button class="key" aria-label="Edit mode"><svg><use href="#i-edit"/></svg></button>
          <i class="sep"></i>
          <button class="tool" aria-label="Stop drawing"><svg><use href="#i-traffic"/></svg></button>
        </div>
        <div class="group">
          <button class="tool" aria-label="Insert cursor"><svg><use href="#i-curadd"/></svg></button>
          <button class="tool" aria-label="Delete cursor"><svg><use href="#i-curdel"/></svg></button>
          <button class="tool" aria-label="Previous transition"><svg><use href="#i-prevedge"/></svg></button>
          <button class="tool" aria-label="Next transition"><svg><use href="#i-nextedge"/></svg></button>
          <button class="tool" aria-label="Previous falling edge"><svg><use href="#i-e1"/></svg></button>
          <button class="tool" aria-label="Next falling edge"><svg><use href="#i-e2"/></svg></button>
          <button class="tool" aria-label="Previous rising edge"><svg><use href="#i-e3"/></svg></button>
          <button class="tool" aria-label="Next rising edge"><svg><use href="#i-e4"/></svg></button>
        </div>
        <div class="group wide">
          <button class="tool" aria-label="Find drivers"><svg><use href="#i-merge"/></svg></button><button class="caret" aria-label="Drivers menu"></button>
          <button class="tool" aria-label="Find readers"><svg><use href="#i-split"/></svg></button><button class="caret" aria-label="Readers menu"></button>
          <button class="tool" aria-label="Show cause"><svg><use href="#i-node"/></svg></button>
          <i class="sep"></i>
          <label for="search" class="dim">Search:</label><select id="search" class="field search"><option></option></select><span class="drop off"></span>
          <button class="tool" aria-label="Search reverse"><svg><use href="#i-sprev"/></svg></button>
          <button class="tool" aria-label="Search forward"><svg><use href="#i-snext"/></svg></button>
          <button class="tool" aria-label="Search options"><svg><use href="#i-sopt"/></svg></button>
        </div>
      </div>

      <div class="toolrow">
        <div class="group wide">
          <button class="tool" aria-label="Zoom in"><svg><use href="#i-zin"/></svg></button>
          <button class="tool" aria-label="Zoom out"><svg><use href="#i-zout"/></svg></button>
          <button class="tool" aria-label="Zoom full"><svg><use href="#i-zfull"/></svg></button>
          <button class="tool" aria-label="Zoom on cursor"><svg><use href="#i-zcur"/></svg></button>
          <button class="tool" aria-label="Zoom between cursors"><svg><use href="#i-zcurs"/></svg></button>
          <button class="tool" aria-label="Zoom other window"><svg><use href="#i-zsel"/></svg></button>
        </div>
        <div class="group">
          <button class="key down" aria-label="Events only"><svg><use href="#i-w1"/></svg></button>
          <button class="key" aria-label="Expanded delta"><svg><use href="#i-w2"/></svg></button>
          <button class="key" aria-label="Expanded events"><svg><use href="#i-w3"/></svg></button>
          <i class="sep"></i>
          <button class="tool" aria-label="Expand all time"><svg><use href="#i-w4"/></svg></button>
          <button class="tool" aria-label="Expand at cursor"><svg><use href="#i-w5"/></svg></button>
          <button class="tool" aria-label="Collapse all time"><svg><use href="#i-w6"/></svg></button>
          <button class="tool" aria-label="Collapse at cursor"><svg><use href="#i-w7"/></svg></button>
        </div>
      </div>
    </section>

    <section class="dock">
      <header class="panebar">
        <svg class="paneicon"><use href="#i-wave"/></svg>
        <h2>Wave - Default</h2>
        <div class="grip"><i></i></div>
        <button aria-label="Minimize pane"><svg viewBox="0 0 12 12"><path d="M1 6h10" stroke-width="2"/></svg></button>
        <button aria-label="Undock pane"><svg viewBox="0 0 12 12"><path d="M1 6h5v5H1zM5 7l5-5M6 2h4v4" stroke-width="1.600"/></svg></button>
        <button class="cut" aria-label="Close pane"></button>
      </header>

      <div class="panes">
        <div class="head names"><svg class="headicon"><use href="#i-objects"/></svg><i class="tri"></i></div>
        <div class="head msgs">Msgs</div>
        <div class="black"></div>
        <div class="edge dark"></div>

        <div class="body gutter">
          <table class="signals"><tbody id="names"></tbody></table>
          <div class="endmark"></div>
        </div>
        <div class="body">
          <table class="signals"><tbody id="values"></tbody></table>
          <div class="endmark plain"></div>
        </div>
        <svg class="black" id="plot" role="img" aria-label="Signal waveforms"></svg>
        <div class="edge sb"><span></span></div>

        <div class="foot">
          <div class="now"><span class="minis"><svg><use href="#i-grp"/></svg><svg><use href="#i-note"/></svg><svg><use href="#i-plus"/></svg></span><b>Now</b></div>
          <div class="cur"><span class="minis"><svg><use href="#i-lock"/></svg><svg><use href="#i-tool"/></svg><svg><use href="#i-minus"/></svg></span><b>Cursor 1</b></div>
        </div>
        <div class="foot">
          <div class="now"><b>10.2 ns</b></div>
          <div class="cur"><b>0.00 ns</b></div>
        </div>
        <svg class="black" id="ruler" role="img" aria-label="Time ruler"></svg>
        <div class="edge dark"></div>

        <div class="hscroll indent"><button class="arrow l" aria-label="Scroll names left"></button><span class="trough"><span class="thumb most"></span></span><button class="arrow r" aria-label="Scroll names right"></button></div>
        <div class="hscroll off"><button class="arrow l" aria-label="Scroll values left"></button><span class="trough"></span><button class="arrow r" aria-label="Scroll values right"></button></div>
        <div class="hscroll big"><button class="arrow l" aria-label="Scroll waves left"></button><span class="trough"><span class="thumb"></span></span><button class="arrow r" aria-label="Scroll waves right"></button></div>
        <div class="edge dark"></div>
      </div>
    </section>

    <nav class="tabs">
      <a href="#" class="tab active"><svg><use href="#i-wave"/></svg>Wave<i>×</i></a>
      <a href="#" class="tab"><svg><use href="#i-objects"/></svg>Objects<i>×</i></a>
      <a href="#" class="tab"><svg><use href="#i-gear"/></svg>Processes<i>×</i></a>
      <a href="#" class="tab"><svg><use href="#i-lib"/></svg>Library<i>×</i></a>
      <a href="#" class="tab"><svg><use href="#i-project"/></svg>Project<i>×</i></a>
      <a href="#" class="tab"><svg><use href="#i-sim"/></svg>sim<i>×</i></a>
    </nav>
  </main>
  <div class="watermark">https://blog.csdn.net/qq_54046303</div>
</div>
<script src="wave.js"></script>
</body>
</html>
```
FILE: styles.css
```css
* { box-sizing: border-box; }
body { margin: 0; background: #f0f0f0; font: 14px "DejaVu Sans Condensed", "DejaVu Sans", sans-serif; color: #1a1a1a; }
button, input, select { font: inherit; color: inherit; margin: 0; padding: 0; border: 0; background: none; border-radius: 0; }
h1, h2 { margin: 0; font-weight: normal; }
i { font-style: normal; }
.sprite { position: absolute; width: 0; height: 0; }
.desktop { position: relative; display: flex; height: 100vh; overflow: hidden; }

/* window behind, showing at the left edge */
.backwin { flex: none; width: 20px; display: flex; flex-direction: column; overflow: hidden; background: linear-gradient(90deg, #f2f2f2 40%, #d8d8d8); font: 14px "Noto Sans", sans-serif; white-space: nowrap; }
.bw-title { height: 32px; background: #fff; }
.globe { width: 24px; height: 24px; margin: 2px; }
.bw-menu { height: 28px; padding-left: 8px; color: #999; background: linear-gradient(90deg, #fff 50%, #e8e8e8); font-size: 13px; }
.bw-tools { height: 32px; border-bottom: 1px solid #bbb; border-left: 5px dotted #ddd; }
.bw-tab { height: 22px; margin-left: 3px; padding-left: 3px; border: 1px solid #999; line-height: 24px; overflow: hidden; }
.bw-pane { height: 370px; background: linear-gradient(90deg, #fff 40%, #dcdcdc); border-bottom: 1px solid #667; border-left: 1px solid #ccc; }
.folder { width: 16px; height: 16px; margin: 5px 4px; }
.bw-warn { height: 26px; margin: 2px 0 8px 2px; border: 1px solid #ccc; border-width: 0 0 1px 1px; padding: 6px 0 0 10px; }
.bw-warn svg { width: 12px; height: 12px; }
.bw-flow { height: 41px; padding-top: 10px; font-size: 13px; }
.bw-list { border: 1px solid #667; border-right: 0; background: linear-gradient(90deg, #fff 40%, #d8d8d8); color: #e0b060; text-align: center; font-weight: bold; line-height: 19px; }
.bw-list div { height: 20px; border-bottom: 1px solid #ccc; }
.bw-list .bw-first { height: 50px; }
.bw-list .bw-scroll { margin-top: 7px; background: #eee; color: #333; border: 0; }
.bw-msgs { flex: 1; margin: 8px 0 0 2px; padding: 3px 0 0 4px; border: 1px solid #999; border-width: 1px 0 0 1px; display: flex; flex-direction: column; gap: 34px; }
.bw-msgs svg { width: 12px; height: 40px; flex: none; }
.bw-msgs span { writing-mode: vertical-rl; transform: rotate(180deg); font: 13px/16px "DejaVu Sans Condensed", sans-serif; color: #000; align-self: flex-start; }

.window { flex: 1; min-width: 0; display: flex; flex-direction: column; border-left: 1px solid #999; background: #efefef; }
.titlebar { height: 36px; flex: none; display: flex; align-items: center; gap: 7px; padding: 2px 0 0 10px; color: #8c8c8c; background: linear-gradient(90deg, #a5a5a5 41.5%, #0078d7 41.5% 44.7%, #e5e5e5 44.7% 57.4%, #a5a5a5 57.4%) top / 100% 1px no-repeat #fff; }
.logo { width: 18px; height: 20px; }
.titlebar h1 { flex: 1; font: 16px "Noto Sans", sans-serif; }
.winbtns { display: flex; gap: 46px; padding-right: 5px; }
.winbtns button { width: 12px; height: 12px; display: block; }
.winbtns svg { width: 12px; height: 12px; display: block; overflow: visible; fill: none; stroke: #888; }
.menubar { height: 30px; flex: none; display: flex; gap: 19px; padding: 0 0 0 8px; background: #fff; border-bottom: 1px solid #999; font: 15px "Noto Sans", sans-serif; color: #777; }

.toolbars { flex: none; padding-bottom: 2px; border-bottom: 1px solid #bbb; }
.toolrow { display: flex; height: 40px; gap: 2px; }
.group { display: flex; align-items: center; padding: 0 5px 4px 14px; border: 1px solid #777; border-width: 0 1px 1px 0; box-shadow: inset 1px 1px #fff; background: linear-gradient(#fff, #fff) 4px 2px / 1px 34px no-repeat, linear-gradient(#888, #888) 5px 2px / 1px 35px no-repeat, #efefef; }
.group.wide { padding-right: 9px; }
.group label { padding: 0 6px; font-size: 13px; }
.group .dim { color: #8a8a8a; }
.tool { width: 27px; height: 22px; display: grid; place-items: center; flex: none; }
.tool svg, .key svg { width: 20px; height: 20px; display: block; }
.key { width: 25px; height: 25px; margin: 0 4px; flex: none; display: grid; place-items: center; border: 1px solid; border-color: #fff #777 #777 #fff; box-shadow: inset -1px -1px #bbb; }
.key.down { background: #fff; border-color: #777 #fff #fff #777; box-shadow: none; }
.caret { width: 12px; height: 20px; flex: none; display: grid; place-items: center; }
.caret::before, .tri { content: ""; border: 4px solid transparent; border-top-color: #000; border-bottom: 0; }
.sep { width: 16px; height: 20px; flex: none; background: repeating-linear-gradient(#666 0 1px, transparent 1px 2px) 7px 0 / 1px 100% no-repeat; }
.field { height: 24px; flex: none; border: 1px solid; border-color: #888 #fff #fff #888; padding: 2px 2px 0; appearance: none; font: 15px "Liberation Mono", monospace; }
.help { width: 92px; background: #fff; margin-right: 6px; }
.runlen { width: 76px; background: #fff; margin: 0 3px; }
.layout { width: 153px; }
.collayout { width: 266px; }
.search { width: 143px; }
.spin { display: flex; flex-direction: column; width: 16px; margin-right: 5px; }
.spin button { height: 11px; display: grid; place-items: center; border: 1px solid; border-color: #fff #777 #777 #fff; }
.spin button::before { content: ""; border: 4px solid transparent; border-bottom: 6px solid #000; border-top: 0; }
.spin .spin-down::before { border-bottom: 0; border-top: 6px solid #000; }
.drop { width: 22px; height: 22px; margin: 0 3px; flex: none; display: grid; place-items: center; border: 1px solid; border-color: #fff #777 #777 #fff; }
.drop::before { content: ""; border: 8px solid transparent; border-top-color: #000; border-bottom: 0; }
.drop.off::before { border-width: 7px; border-bottom: 0; border-top-color: #777; }

.dock { flex: 1; min-height: 0; display: flex; flex-direction: column; padding-left: 3px; }
.panebar { flex: none; height: 22px; display: flex; align-items: center; gap: 6px; background: #9ab3d1; }
.paneicon { width: 18px; height: 18px; margin-left: 1px; }
.panebar h2 { font-size: 14px; color: #111; }
.grip { flex: 1; height: 11px; display: grid; place-items: center; background: linear-gradient(#bfe0f2 0 3px, #111 3px 4px, #9ab3d1 4px 6px, #bfe0f2 6px 9px, #111 9px 10px, transparent 10px); }
.grip i { width: 26px; height: 9px; background: repeating-linear-gradient(transparent 0 1px, #9ab3d1 1px 3px), repeating-linear-gradient(90deg, #345 0 1px, #cde 1px 3px); }
.panebar button { width: 15px; height: 15px; background: #f4f4f4; border: 1px solid; border-color: #fff #777 #777 #fff; display: grid; place-items: center; }
.panebar button.cut { width: 2px; }
.panebar button svg { width: 12px; height: 12px; fill: none; stroke: #000; }

.panes { flex: 1; min-height: 0; display: grid; grid-template-columns: 198px 126px 1fr 7px; grid-template-rows: 23px 1fr 50px 24px; gap: 3px; margin: 2px 0 0 1px; border-top: 1px solid #888; background: #fff; }
.head { background: #808080; color: #e8e8e8; display: flex; align-items: center; }
.head.names { padding-left: 12px; gap: 6px; }
.head.msgs { justify-content: flex-end; padding-right: 8px; }
.headicon { width: 20px; height: 20px; }
.head .tri { margin-top: 6px; }
.black { background: #000; width: 100%; height: 100%; display: block; min-width: 0; min-height: 0; }
.edge { background: #fff; }
.edge.dark { background: #808080; }
.edge.sb span { display: block; height: 20px; border: 1px solid #777; border-width: 0 0 1px 1px; background: #eee; }
.body { background: #808080; padding-top: 3px; min-height: 0; overflow: hidden; }
.body.gutter { border-left: 10px solid #fff; }
.signals { width: 100%; height: 170px; border-collapse: collapse; background: #fff; table-layout: fixed; }
.signals td { padding: 0 0 0 4px; border-bottom: 2px solid #909090; line-height: 18px; white-space: nowrap; }
.signals tr:last-child td { border-bottom: 0; }
.body.gutter .signals td { padding-left: 25px; }
.sig { display: flex; align-items: center; gap: 7px; }
.sig svg { width: 18px; height: 18px; flex: none; }
.endmark { height: 8px; margin: -3px 5px 0 3px; border: 4px solid transparent; border-width: 4px 0 4px 5px; border-left-color: #000; background: linear-gradient(#000, #000) 0 3px / 100% 1px no-repeat border-box; }
.endmark.plain { border-left: 0; }
.foot { display: flex; flex-direction: column; background: #808080; }
.foot div { flex: 1; display: flex; align-items: center; justify-content: space-between; }
.foot b { font-weight: normal; margin-left: auto; padding-right: 12px; }
.foot .now { background: #fff; flex: 0 0 27px; }
.foot .cur { color: #e8e8e8; }
.minis { display: flex; width: 56px; height: 100%; padding-left: 10px; align-items: center; background: #808080; }
.minis svg { width: 15px; height: 15px; }
.hscroll { display: flex; border: 1px solid #999; border-width: 1px 0; background: #efefef; padding: 1px 2px; min-width: 0; }
.hscroll.indent { border-left: 10px solid #808080; padding-left: 1px; }
.arrow { width: 18px; flex: none; background: #f2f2f2; border: 1px solid; border-color: #fff #777 #777 #fff; display: grid; place-items: center; }
.arrow::before { content: ""; border: 5px solid transparent; border-left: 0; border-right: 6px solid #000; }
.arrow.r::before { border-left: 6px solid #000; border-right: 0; }
.off .arrow.l::before { border-right-color: #aaa; }
.off .arrow.r::before { border-left-color: #aaa; }
.trough { flex: 1; display: flex; background: #f4f4f4; }
.big .trough { background: #c6c6c6; border-left: 1px solid #e8c040; margin-left: 2px; padding-left: 97px; }
.thumb { width: 148px; background: #efefef; border: 1px solid; border-color: #fff #777 #777 #fff; }
.thumb.most { width: 78%; }

.tabs { flex: none; height: 27px; padding-top: 5px; display: flex; border-top: 1px solid #aaa; margin-left: 2px; }
.tabs::after { content: ""; flex: 1; border-top: 2px solid #222; margin-right: 8px; }
.tab { display: flex; align-items: center; gap: 5px; padding: 0 5px; background: #c8c8c8; color: #222; text-decoration: none; border-top: 2px solid #222; border-right: 2px solid #222; overflow: hidden; }
.tab.active { background: #efefef; border-top-color: #efefef; }
.tab svg { width: 19px; height: 19px; flex: none; }
.tab i { width: 11px; color: #aaa; font-size: 17px; font-weight: bold; line-height: 18px; text-align: center; }
.watermark { position: absolute; right: 10px; bottom: 9px; font: 16px "Liberation Sans", sans-serif; color: rgba(255, 255, 255, .75); text-shadow: 1px 1px 1px rgba(120, 120, 120, .7); }

#plot path { fill: none; stroke: #26e00c; stroke-width: 1.3; }
#plot line { stroke: #868686; }
#ruler line { stroke: #22e010; }
#ruler .base { stroke: #909090; }
#ruler text { fill: #22e010; font-size: 14px; text-anchor: middle; }
```
FILE: wave.js
```javascript
// Time axis: one step is 5 ps; 0.7 ns lies ORIGIN px from the pane's left edge.
const STEP = 7.735, ORIGIN = 19, LEFT = 5;
const NS = 'http://www.w3.org/2000/svg';

// value, half period in steps, and one step at which the signal rises
const signals = [
  { value: "1'h1", half: 1, rise: 0 },
  { value: "1'h0", half: 3, rise: 0 },
  { value: "1'h1", half: 6, rise: 0 },
  { value: "1'h1", half: 9, rise: 6 },
  { value: "1'h0", half: 11, rise: 12 },
  { value: "1'h0", half: 13, rise: 10 },
  { value: "1'h1", half: 15, rise: 0 },
  { value: "1'h1", half: 17, rise: 16 }
];

const plot = document.getElementById('plot');
const ruler = document.getElementById('ruler');
const px = step => Math.round(ORIGIN + step * STEP) + 0.5;

function add(parent, name, attrs, text) {
  const el = document.createElementNS(NS, name);
  for (const key in attrs) el.setAttribute(key, attrs[key]);
  if (text) el.textContent = text;
  parent.appendChild(el);
}

function level(signal, step) {
  // even half-period index counted from the rise means high
  return Math.floor((step - signal.rise) / signal.half) % 2 === 0;
}

function draw() {
  plot.replaceChildren();
  ruler.replaceChildren();
  const right = plot.clientWidth - 4;
  const steps = Math.floor((right - ORIGIN - 2) / STEP);

  for (let s = 0; s <= steps; s += 10) {
    add(plot, 'line', { x1: px(s), x2: px(s), y1: 0, y2: '100%' });
  }
  signals.forEach((signal, row) => {
    const hi = Math.round(6 + row * 21.25) + 0.5;
    const y = on => on ? hi : hi + 15;
    let on = level(signal, -2);
    let d = `M${LEFT - 0.5} ${y(signal.half === 1 ? false : on)}V${y(on)}`;
    for (let s = -1; s <= steps; s++) {
      const next = level(signal, s);
      if (next !== on) d += `H${px(s)}V${y(next)}`;
      on = next;
    }
    add(plot, 'path', { d: d + `H${right}` });
  });

  for (let s = -1; s <= steps; s++) {
    const major = s % 10 === 0;
    add(ruler, 'line', { x1: px(s), x2: px(s), y1: major ? 0 : 4, y2: 9 });
    if (s >= 0 && s % 20 === 0) {
      add(ruler, 'text', { x: px(s), y: 25 }, +(0.7 + s / 200).toFixed(1) + ' ns');
    }
  }
  add(ruler, 'line', { class: 'base', x1: LEFT, x2: right, y1: 28.5, y2: 28.5 });
}

document.getElementById('names').innerHTML = signals.map(() =>
  '<tr><td><div class="sig"><svg><use href="#i-diamond"/></svg>/Comp_2_str_vlg_t...</div></td></tr>').join('');
document.getElementById('values').innerHTML = signals.map(s => `<tr><td>${s.value}</td></tr>`).join('');
draw();
addEventListener('resize', draw);
```
